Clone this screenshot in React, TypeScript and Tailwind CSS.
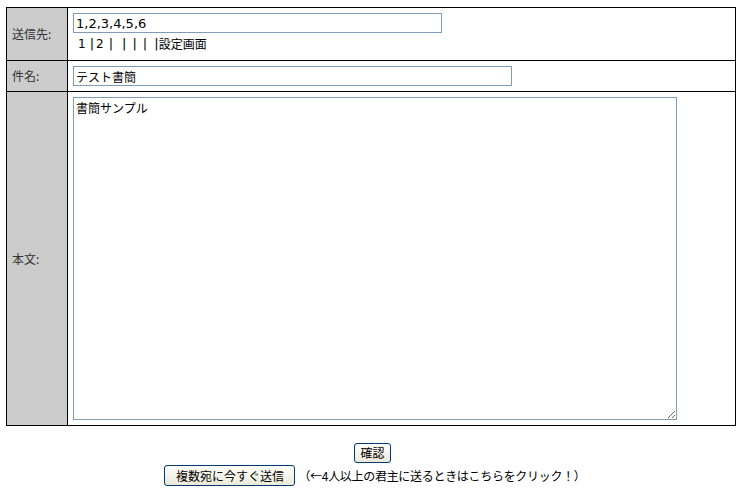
import React from "react";

const font = { fontFamily: '"Noto Sans CJK JP", "DejaVu Sans", sans-serif' };
const latinFont = { fontFamily: '"DejaVu Sans", "Noto Sans CJK JP", sans-serif' };

const labelCell =
  "w-[61px] bg-[#cccccc] border border-black pl-[5px] text-[12px] text-[#333] align-middle";
const valueCell = "border border-black p-[5px] align-top";
const fieldStyle =
  "border border-[#7f9db9] bg-white px-[2px] text-[12px] text-black outline-none";
const xpButton =
  "border border-[#003c74] rounded-[3px] bg-gradient-to-b from-white to-[#ece9d8] text-[12px] text-black leading-none";

const Bar = ({ ml }: { ml: string }) => (
  <span className={`text-[13px] text-black ${ml}`} style={latinFont}>
    |
  </span>
);

export default function App() {
  return (
    <div className="w-[745px] h-[488px] bg-white overflow-hidden" style={font}>
      <div className="pt-[7px] pl-[6px]">
        <table className="w-[730px] border-collapse border border-black">
          <tbody>
            <tr className="h-[53px]">
              <td className={labelCell}>送信先:</td>
              <td className={valueCell}>
                <input
                  className={`${fieldStyle} w-[369px] h-[20px] block text-[13px]`}
                  defaultValue="1,2,3,4,5,6"
                  style={latinFont}
                />
                <div className="text-[12px] leading-[14px] mt-[4px] pl-[5px] flex items-center text-black">
                  <span style={latinFont}>1</span>
                  <Bar ml="ml-[4px]" />
                  <span className="ml-[2px]" style={latinFont}>
                    2
                  </span>
                  <Bar ml="ml-[5px]" />
                  <Bar ml="ml-[9px]" />
                  <Bar ml="ml-[6px]" />
                  <Bar ml="ml-[6px]" />
                  <Bar ml="ml-[7px]" />
                  <span>設定画面</span>
                </div>
              </td>
            </tr>
            <tr className="h-[31px]">
              <td className={labelCell}>件名:</td>
              <td className={valueCell}>
                <input
                  className={`${fieldStyle} w-[439px] h-[20px] block`}
                  defaultValue="テスト書簡"
                  style={font}
                />
              </td>
            </tr>
            <tr>
              <td className={labelCell}>本文:</td>
              <td className={valueCell}>
                <textarea
                  className={`${fieldStyle} w-[604px] h-[323px] block resize py-[1px]`}
                  defaultValue="書簡サンプル"
                  style={font}
                />
              </td>
            </tr>
          </tbody>
        </table>
      </div>
      <div className="flex flex-col items-center mt-[17px]">
        <button className={`${xpButton} h-[20px] px-[5px]`} style={font}>
          確認
        </button>
        <div className="flex items-center mt-[2px] ml-[5px] text-[12px] text-black">
          <button className={`${xpButton} h-[21px] w-[131px]`} style={font}>
            複数宛に今すぐ送信
          </button>
          <span className="ml-[3px] tracking-[-0.3px]">
            （←4人以上の君主に送るときはこちらをクリック！）
          </span>
        </div>
      </div>
    </div>
  );
}
